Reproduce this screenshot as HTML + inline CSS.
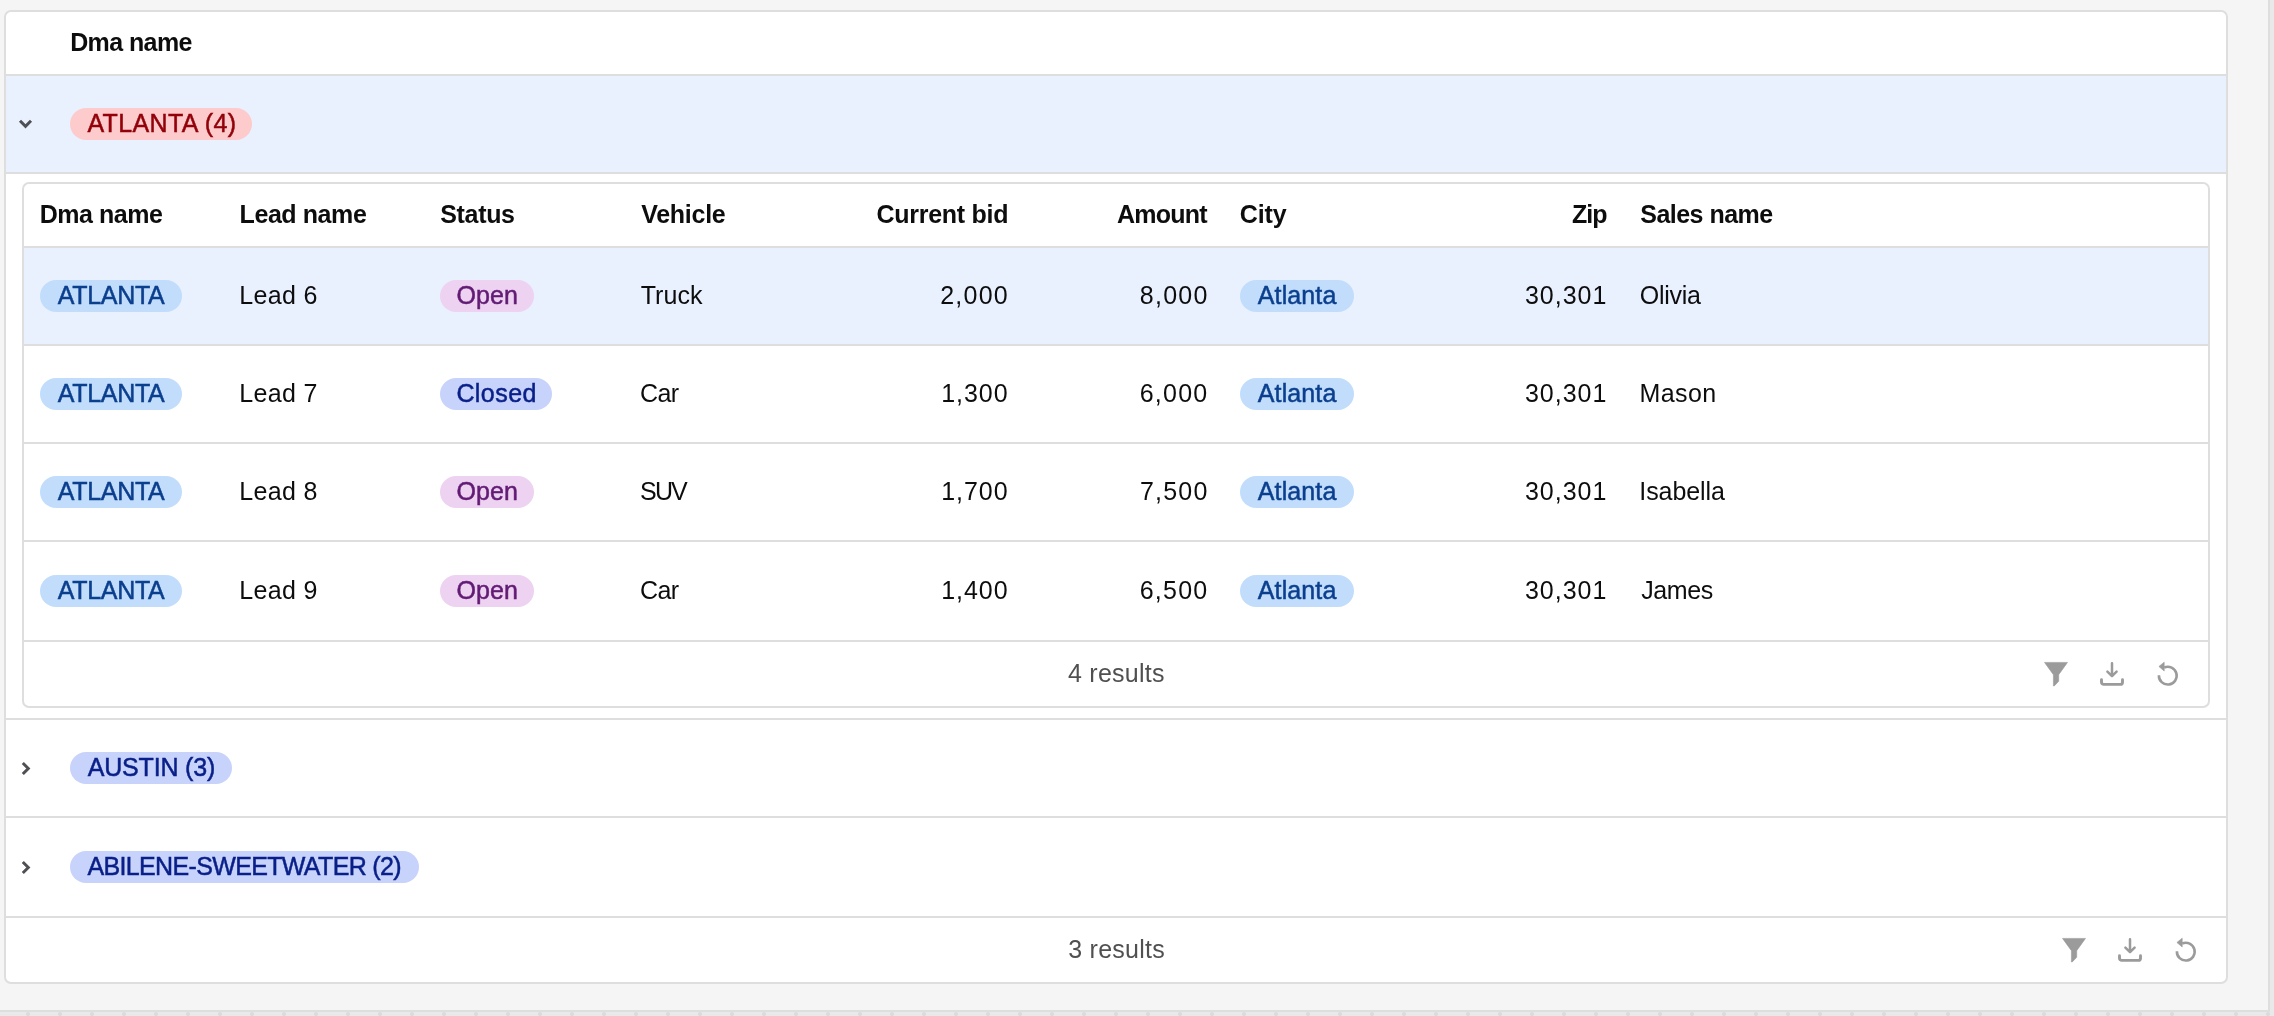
<!DOCTYPE html>
<html lang="en">
<head>
<meta charset="utf-8">
<title>Leads by DMA</title>
<style>
html,body{margin:0;padding:0;}
body{width:2274px;height:1016px;overflow:hidden;background:#f5f5f5;position:relative;
  font-family:"Liberation Sans",sans-serif;font-size:25px;color:#0d0d0d;}
*{box-sizing:border-box;}
span{position:relative;display:inline-block;}
.gutter-r{position:absolute;left:2268px;top:0;width:6px;height:1016px;background:#e9e9e9;border-left:2px solid #dedede;}
.gutter-b{position:absolute;left:0;top:1010px;width:2270px;height:6px;background:#e9e9e9;border-top:2px solid #dedede;}
.dots{position:absolute;left:0;top:1010px;}
.card{position:absolute;left:4px;top:10px;width:2224px;height:974px;will-change:transform;border:2px solid #dedede;border-radius:7px;background:#fff;overflow:hidden;}
.hdr{height:64px;border-bottom:2px solid #dedede;position:relative;}
.th{position:absolute;top:0;height:62px;line-height:60px;font-weight:bold;font-size:25px;white-space:nowrap;}
.grow{position:relative;border-bottom:2px solid #dedede;height:98px;}
.sel{background:#e9f0fe;}
.pill{position:absolute;height:32px;line-height:31px;font-size:25px;border-radius:16px;text-align:center;white-space:nowrap;-webkit-text-stroke:0.5px currentColor;}
.p-red{background:#fdcbcb;color:#92000a;}
.p-blue{background:#c2ddfc;color:#0b3f8e;}
.p-pink{background:#eed2f1;color:#621b74;}
.p-indigo{background:#c8d3fb;color:#091f88;}
.chev{position:absolute;left:0;top:0;}
.nest{position:relative;height:546px;border-bottom:2px solid #dedede;}
.inner{position:absolute;left:16px;top:8px;width:2188px;height:526px;border:2px solid #dedede;border-radius:7px;background:#fff;overflow:hidden;}
.irow{height:98px;border-bottom:2px solid #dedede;position:relative;}
.td{position:absolute;top:0;height:96px;line-height:94px;white-space:nowrap;}
.r{text-align:right;}
.foot{position:relative;height:64px;}
.res{position:absolute;left:0;right:0;top:0;height:64px;line-height:62px;text-align:center;color:#505050;}
.ico{position:absolute;top:20px;width:26px;height:26px;overflow:visible;}
</style>
</head>
<body>
<div class="gutter-r"></div>
<div class="gutter-b"></div>
<svg class="dots" width="2274" height="6" viewBox="0 0 2274 6"><defs><pattern id="dp" x="12" y="0" width="32" height="6" patternUnits="userSpaceOnUse"><circle cx="16" cy="4" r="2.1" fill="#dbdbdb"/></pattern></defs><rect x="0" y="0" width="2274" height="6" fill="url(#dp)"/></svg>
<div class="card">
<div class="hdr"><div class="th" style="left:64px"><span id="t0" style="letter-spacing:-0.59px;left:0.14px">Dma name</span></div></div>
<div class="grow sel"><svg class="chev" width="60" height="96" viewBox="0 0 60 96"><path d="M14 44.8 L19.5 50.3 L25 44.8" fill="none" stroke="#4f5054" stroke-width="3"/></svg><div class="pill p-red" style="left:64px;top:32px;width:182px"><span id="g0" style="letter-spacing:0.38px;left:0.97px">ATLANTA (4)</span></div></div>
<div class="nest"><div class="inner">
<div class="hdr">
<div class="th" style="left:16px"><span id="h0" style="letter-spacing:-0.46px;left:-0.39px">Dma name</span></div>
<div class="th" style="left:216px"><span id="h1" style="letter-spacing:-0.42px;left:-0.46px">Lead name</span></div>
<div class="th" style="left:416px"><span id="h2" style="letter-spacing:-0.32px;left:0.21px">Status</span></div>
<div class="th" style="left:616px"><span id="h3" style="letter-spacing:-0.26px;left:1.13px">Vehicle</span></div>
<div class="th r" style="left:800px;width:184px"><span id="h4" style="letter-spacing:-0.28px;left:0.14px">Current bid</span></div>
<div class="th r" style="left:1000px;width:184px"><span id="h5" style="letter-spacing:-0.77px;left:-1.27px">Amount</span></div>
<div class="th" style="left:1216px"><span id="h6" style="letter-spacing:-0.12px;left:-0.25px">City</span></div>
<div class="th r" style="left:1400px;width:184px"><span id="h7" style="letter-spacing:-0.96px;left:-1.37px">Zip</span></div>
<div class="th" style="left:1616px"><span id="h8" style="letter-spacing:-0.53px;left:0.31px">Sales name</span></div>
</div>
<div class="irow sel">
  <div class="pill p-blue" style="left:16px;top:32px;width:142px"><span id="r0_dma" style="letter-spacing:-0.31px;left:0.08px">ATLANTA</span></div>
  <div class="td" style="left:216px"><span id="r0_lead" style="letter-spacing:0.32px;left:-0.76px">Lead 6</span></div>
  <div class="pill p-pink" style="left:416px;top:32px;width:94px"><span id="r0_st" style="letter-spacing:0.05px;left:0.20px">Open</span></div>
  <div class="td" style="left:616px"><span id="r0_veh" style="letter-spacing:0.05px;left:0.73px">Truck</span></div>
  <div class="td r" style="left:800px;width:184px"><span id="r0_bid" style="letter-spacing:1.23px;left:0.96px">2,000</span></div>
  <div class="td r" style="left:1000px;width:184px"><span id="r0_amt" style="letter-spacing:1.25px;left:0.60px">8,000</span></div>
  <div class="pill p-blue" style="left:1216px;top:32px;width:114px"><span id="r0_city" style="letter-spacing:0.12px;left:0.11px">Atlanta</span></div>
  <div class="td r" style="left:1400px;width:184px"><span id="r0_zip" style="letter-spacing:1.00px;left:-0.60px">30,301</span></div>
  <div class="td" style="left:1616px"><span id="r0_sales" style="letter-spacing:-0.28px;left:-0.20px">Olivia</span></div>
</div>
<div class="irow">
  <div class="pill p-blue" style="left:16px;top:32px;width:142px"><span id="r1_dma" style="letter-spacing:-0.31px;left:0.08px">ATLANTA</span></div>
  <div class="td" style="left:216px"><span id="r1_lead" style="letter-spacing:0.36px;left:-0.86px">Lead 7</span></div>
  <div class="pill p-indigo" style="left:416px;top:32px;width:112px"><span id="r1_st" style="letter-spacing:0.44px;left:0.61px">Closed</span></div>
  <div class="td" style="left:616px"><span id="r1_veh" style="letter-spacing:-0.60px;left:0.11px">Car</span></div>
  <div class="td r" style="left:800px;width:184px"><span id="r1_bid" style="letter-spacing:0.93px;left:0.50px">1,300</span></div>
  <div class="td r" style="left:1000px;width:184px"><span id="r1_amt" style="letter-spacing:1.22px;left:0.40px">6,000</span></div>
  <div class="pill p-blue" style="left:1216px;top:32px;width:114px"><span id="r1_city" style="letter-spacing:0.12px;left:0.11px">Atlanta</span></div>
  <div class="td r" style="left:1400px;width:184px"><span id="r1_zip" style="letter-spacing:1.00px;left:-0.60px">30,301</span></div>
  <div class="td" style="left:1616px"><span id="r1_sales" style="letter-spacing:0.40px;left:-0.56px">Mason</span></div>
</div>
<div class="irow">
  <div class="pill p-blue" style="left:16px;top:32px;width:142px"><span id="r2_dma" style="letter-spacing:-0.31px;left:0.08px">ATLANTA</span></div>
  <div class="td" style="left:216px"><span id="r2_lead" style="letter-spacing:0.32px;left:-0.76px">Lead 8</span></div>
  <div class="pill p-pink" style="left:416px;top:32px;width:94px"><span id="r2_st" style="letter-spacing:0.05px;left:0.20px">Open</span></div>
  <div class="td" style="left:616px"><span id="r2_veh" style="letter-spacing:-1.83px;left:0.06px">SUV</span></div>
  <div class="td r" style="left:800px;width:184px"><span id="r2_bid" style="letter-spacing:0.93px;left:0.50px">1,700</span></div>
  <div class="td r" style="left:1000px;width:184px"><span id="r2_amt" style="letter-spacing:1.22px;left:0.61px">7,500</span></div>
  <div class="pill p-blue" style="left:1216px;top:32px;width:114px"><span id="r2_city" style="letter-spacing:0.12px;left:0.11px">Atlanta</span></div>
  <div class="td r" style="left:1400px;width:184px"><span id="r2_zip" style="letter-spacing:1.00px;left:-0.60px">30,301</span></div>
  <div class="td" style="left:1616px"><span id="r2_sales" style="letter-spacing:-0.09px;left:-0.69px">Isabella</span></div>
</div>
<div class="irow" style="height:100px">
  <div class="pill p-blue" style="left:16px;top:33px;width:142px"><span id="r3_dma" style="letter-spacing:-0.31px;left:0.08px">ATLANTA</span></div>
  <div class="td" style="left:216px;top:1px"><span id="r3_lead" style="letter-spacing:0.36px;left:-0.86px">Lead 9</span></div>
  <div class="pill p-pink" style="left:416px;top:33px;width:94px"><span id="r3_st" style="letter-spacing:0.05px;left:0.20px">Open</span></div>
  <div class="td" style="left:616px;top:1px"><span id="r3_veh" style="letter-spacing:-0.60px;left:0.11px">Car</span></div>
  <div class="td r" style="left:800px;width:184px;top:1px"><span id="r3_bid" style="letter-spacing:0.93px;left:0.50px">1,400</span></div>
  <div class="td r" style="left:1000px;width:184px;top:1px"><span id="r3_amt" style="letter-spacing:1.22px;left:0.40px">6,500</span></div>
  <div class="pill p-blue" style="left:1216px;top:33px;width:114px"><span id="r3_city" style="letter-spacing:0.12px;left:0.11px">Atlanta</span></div>
  <div class="td r" style="left:1400px;width:184px;top:1px"><span id="r3_zip" style="letter-spacing:1.00px;left:-0.60px">30,301</span></div>
  <div class="td" style="left:1616px;top:1px"><span id="r3_sales" style="letter-spacing:-0.35px;left:1.14px">James</span></div>
</div>
<div class="foot"><div class="res"><span id="f0" style="letter-spacing:0.27px;left:0.42px">4 results</span></div><svg class="ico" style="left:2020px" viewBox="0 0 26 26"><path d="M0.5 0.4 H23.5 L14.7 12.7 V19.3 L10.3 23.9 H9.4 V12.7 Z" fill="#9b9b9b" stroke="#9b9b9b" stroke-width="0.6" stroke-linejoin="round"/></svg><svg class="ico" style="left:2076px" viewBox="0 0 26 26" fill="none" stroke="#9b9b9b" stroke-linecap="round" stroke-linejoin="round"><path d="M12 1.2 V14 M7.4 9.6 L12 14.2 L16.6 9.6" stroke-width="2.5"/><path d="M1.5 17.8 V20.2 A2.2 2.2 0 0 0 3.7 22.4 H20.3 A2.2 2.2 0 0 0 22.5 20.2 V17.8" stroke-width="2.9"/></svg><svg class="ico" style="left:2132px" viewBox="0 0 26 26"><path d="M8.2 5.5 A8.9 8.9 0 1 1 2.9 13.2" fill="none" stroke="#9b9b9b" stroke-width="2.6"/><path d="M2.9 4.5 L8.2 0.2 V9.0 Z" fill="#9b9b9b" stroke="#9b9b9b" stroke-width="0.6" stroke-linejoin="round"/></svg></div>
</div></div>
<div class="grow"><svg class="chev" width="60" height="98" viewBox="0 0 60 98"><path d="M16.8 43 L22.3 48.5 L16.8 54" fill="none" stroke="#4f5054" stroke-width="3"/></svg><div class="pill p-indigo" style="left:64px;top:32px;width:162px"><span id="g1" style="letter-spacing:-0.17px;left:0.44px">AUSTIN (3)</span></div></div>
<div class="grow" style="height:100px"><svg class="chev" width="60" height="100" viewBox="0 -1 60 100"><path d="M16.8 43 L22.3 48.5 L16.8 54" fill="none" stroke="#4f5054" stroke-width="3"/></svg><div class="pill p-indigo" style="left:64px;top:33px;width:349px"><span id="g2" style="letter-spacing:-0.65px;left:-0.27px">ABILENE-SWEETWATER (2)</span></div></div>
<div class="foot"><div class="res"><span id="f1" style="letter-spacing:0.24px;left:0.60px">3 results</span></div><svg class="ico" style="left:2056px" viewBox="0 0 26 26"><path d="M0.5 0.4 H23.5 L14.7 12.7 V19.3 L10.3 23.9 H9.4 V12.7 Z" fill="#9b9b9b" stroke="#9b9b9b" stroke-width="0.6" stroke-linejoin="round"/></svg><svg class="ico" style="left:2112px" viewBox="0 0 26 26" fill="none" stroke="#9b9b9b" stroke-linecap="round" stroke-linejoin="round"><path d="M12 1.2 V14 M7.4 9.6 L12 14.2 L16.6 9.6" stroke-width="2.5"/><path d="M1.5 17.8 V20.2 A2.2 2.2 0 0 0 3.7 22.4 H20.3 A2.2 2.2 0 0 0 22.5 20.2 V17.8" stroke-width="2.9"/></svg><svg class="ico" style="left:2168px" viewBox="0 0 26 26"><path d="M8.2 5.5 A8.9 8.9 0 1 1 2.9 13.2" fill="none" stroke="#9b9b9b" stroke-width="2.6"/><path d="M2.9 4.5 L8.2 0.2 V9.0 Z" fill="#9b9b9b" stroke="#9b9b9b" stroke-width="0.6" stroke-linejoin="round"/></svg></div>
</div>
</body>
</html>
